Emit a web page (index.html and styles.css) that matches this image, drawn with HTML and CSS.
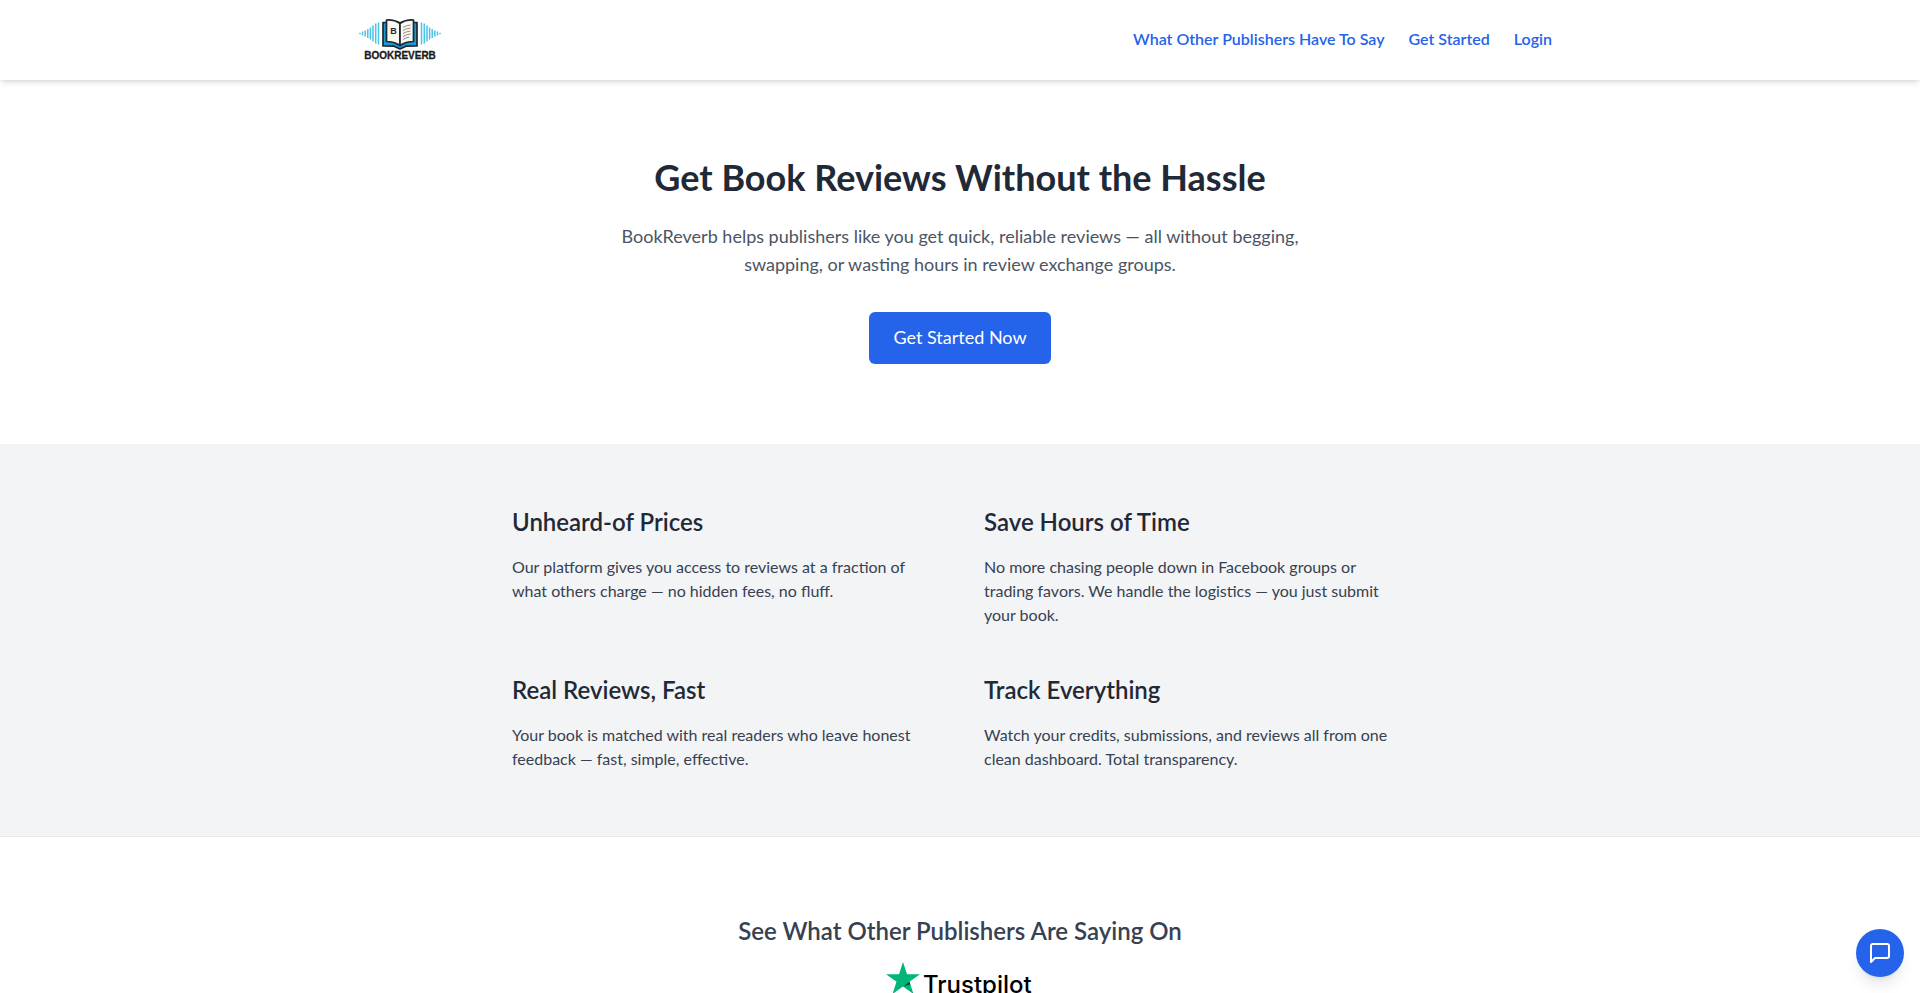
FILE: index.html
```html
<!DOCTYPE html>
<html lang="en">
<head>
  <meta charset="UTF-8">
  <meta name="viewport" content="width=device-width, initial-scale=1.0">
  <title>BookReverb</title>
  <link rel="stylesheet" href="styles.css">
</head>
<body>
  <header class="header">
    <div class="header-inner">
      <a href="#" class="logo" aria-label="BookReverb">
        <svg width="96" height="64" viewBox="0 0 96 64">
          <!-- sound waves -->
          <g stroke="#49c4e6" stroke-width="1.5">
            <path d="M8 24.800v1.400M10.600 23.500v4M13.200 22.500v6M15.800 21v9M18.400 19.500v12M21 17.500v16M23.700 15.500v20M26.500 14.500v22"/>
            <path d="M88 24.800v1.400M85.400 23.500v4M82.800 22.500v6M80.200 21v9M77.600 19.500v12M75 17.500v16M72.300 15.500v20M69.500 14.500v22"/>
          </g>
          <!-- book -->
          <path d="M31 14.500h34v23.500l-11 .2-6 2.800-6-2.800-11-.2z" fill="#1b9ad2" stroke="#1d2733" stroke-width="1.700" stroke-linejoin="round"/>
          <path d="M34.500 12q8-.5 13.500 3.500v22q-6-4-13.500-4z" fill="#fdf8ee" stroke="#1d2733" stroke-width="1.700" stroke-linejoin="round"/>
          <path d="M61.500 12q-8-.5-13.500 3.500v22q6-4 13.500-4z" fill="#fdf8ee" stroke="#1d2733" stroke-width="1.700" stroke-linejoin="round"/>
          <path d="M51 19.500q3-2 7.500-2.500M51 22.500q3-2 7.500-2.500M51 25.500q3-2 7.500-2.500M51 28.500q3-2 7.500-2.500M51 31.500q3-2 6-2.300" fill="none" stroke="#6b6f73" stroke-width=".8"/>
          <text x="41.500" y="26" class="logo-letter">B</text>
          <text x="48" y="51" class="logo-name">BOOKREVERB</text>
        </svg>
      </a>
      <nav class="nav">
        <a href="#reviews">What Other Publishers Have To Say</a>
        <a href="#start">Get Started</a>
        <a href="#login">Login</a>
      </nav>
    </div>
  </header>

  <section class="hero" id="start">
    <h1>Get Book Reviews Without the Hassle</h1>
    <p>BookReverb helps publishers like you get quick, reliable reviews — all without begging, swapping, or wasting hours in review exchange groups.</p>
    <a href="#signup" class="btn">Get Started Now</a>
  </section>

  <section class="features">
    <div class="features-grid">
      <div>
        <h2>Unheard-of Prices</h2>
        <p>Our platform gives you access to reviews at a fraction of what others charge — no hidden fees, no fluff.</p>
      </div>
      <div>
        <h2>Save Hours of Time</h2>
        <p>No more chasing people down in Facebook groups or trading favors. We handle the logistics — you just submit your book.</p>
      </div>
      <div>
        <h2>Real Reviews, Fast</h2>
        <p>Your book is matched with real readers who leave honest feedback — fast, simple, effective.</p>
      </div>
      <div>
        <h2>Track Everything</h2>
        <p>Watch your credits, submissions, and reviews all from one clean dashboard. Total transparency.</p>
      </div>
    </div>
  </section>

  <section class="reviews" id="reviews">
    <h2>See What Other Publishers Are Saying On</h2>
    <a href="#trustpilot" class="trustpilot" aria-label="Trustpilot">
      <svg width="148" height="40" viewBox="0 0 148 40">
        <path d="M17 1l4 12.200h13l-10.500 7.600 4 12.200L17 25.500 6.500 33l4-12.200L0 13.200h13z" fill="#00b67a"/>
        <path d="M24.400 23.500l-.9-2.700L17 25.500z" fill="#005128"/>
        <text x="37" y="32" class="trustpilot-name">Trustpilot</text>
      </svg>
    </a>
  </section>

  <button class="chat" type="button" aria-label="Open chat">
    <svg width="24" height="24" viewBox="0 0 24 24" fill="none" stroke="#fff" stroke-width="2" stroke-linecap="round" stroke-linejoin="round">
      <path d="M21 15a2 2 0 0 1-2 2H7l-4 4V5a2 2 0 0 1 2-2h14a2 2 0 0 1 2 2z"/>
    </svg>
  </button>
</body>
</html>
```

FILE: styles.css
```css
* {
  box-sizing: border-box;
}
body {
  margin: 0;
  font-family: Lato, sans-serif;
  font-size: 16px;
  line-height: 24px;
  color: #1f2937;
  background-color: #fff;
}
h1, h2, p {
  margin: 0;
}
a {
  text-decoration: none;
}
svg {
  display: block;
}

/* header */
.header {
  position: relative;
  padding: 8px 0;
  background-color: #fff;
  box-shadow: 0 4px 6px -1px rgba(0, 0, 0, 0.1), 0 2px 4px -2px rgba(0, 0, 0, 0.1);
}
.header-inner {
  display: flex;
  align-items: center;
  justify-content: space-between;
  max-width: 1280px;
  margin: 0 auto;
  padding: 0 48px 0 32px;
}
.logo-letter {
  font: bold 9px "Liberation Sans", sans-serif;
  fill: #1d2733;
  text-anchor: middle;
}
.logo-name {
  font: bold 10px "Liberation Sans", sans-serif;
  fill: #1b1b1b;
  stroke: #1b1b1b;
  stroke-width: 0.3px;
  text-anchor: middle;
}
.nav {
  display: flex;
  gap: 24px;
  padding-bottom: 2px;
}
.nav a {
  font-weight: 600;
  color: #2563eb;
}
.nav a:hover {
  text-decoration: underline;
}

/* hero */
.hero {
  padding: 80px 24px;
  text-align: center;
}
.hero h1 {
  margin-bottom: 28px;
  font-size: 36px;
  line-height: 34px;
  font-weight: 700;
}
.hero p {
  max-width: 700px;
  margin: 0 auto 34px;
  font-size: 18px;
  line-height: 28px;
  color: #4b5563;
}
.btn {
  display: inline-block;
  padding: 11px 24px 13px;
  border-radius: 6px;
  font-size: 18px;
  line-height: 28px;
  color: #fff;
  background-color: #2563eb;
  vertical-align: top;
}
.btn:hover {
  background-color: #1d4ed8;
}

/* features */
.features {
  padding: 64px 24px;
  background-color: #f3f4f6;
}
.features-grid {
  display: grid;
  grid-template-columns: 1fr 1fr;
  gap: 48px;
  max-width: 896px;
  margin: 0 auto;
}
.features h2 {
  margin-bottom: 19px;
  font-size: 24px;
  line-height: 28px;
  font-weight: 600;
}
.features p {
  padding-bottom: 1px;
  color: #374151;
}

/* reviews */
.reviews {
  display: flex;
  flex-direction: column;
  align-items: center;
  gap: 16px;
  padding: 80px 24px;
  border-top: 1px solid #e5e7eb;
}
.reviews h2 {
  font-size: 24px;
  line-height: 28px;
  font-weight: 600;
  color: #374151;
}
.trustpilot-name {
  font: 500 24px Inter, "Liberation Sans", sans-serif;
  fill: #000;
}

/* chat button */
.chat {
  position: fixed;
  right: 16px;
  bottom: 16px;
  display: flex;
  align-items: center;
  justify-content: center;
  width: 48px;
  height: 48px;
  padding: 0;
  border: none;
  border-radius: 50%;
  background-color: #2563eb;
  box-shadow: 0 10px 15px -3px rgba(0, 0, 0, 0.1), 0 4px 6px -4px rgba(0, 0, 0, 0.1);
  cursor: pointer;
}
.chat:hover {
  background-color: #1d4ed8;
}

@media (max-width: 768px) {
  .features-grid {
    grid-template-columns: 1fr;
  }
}
```
